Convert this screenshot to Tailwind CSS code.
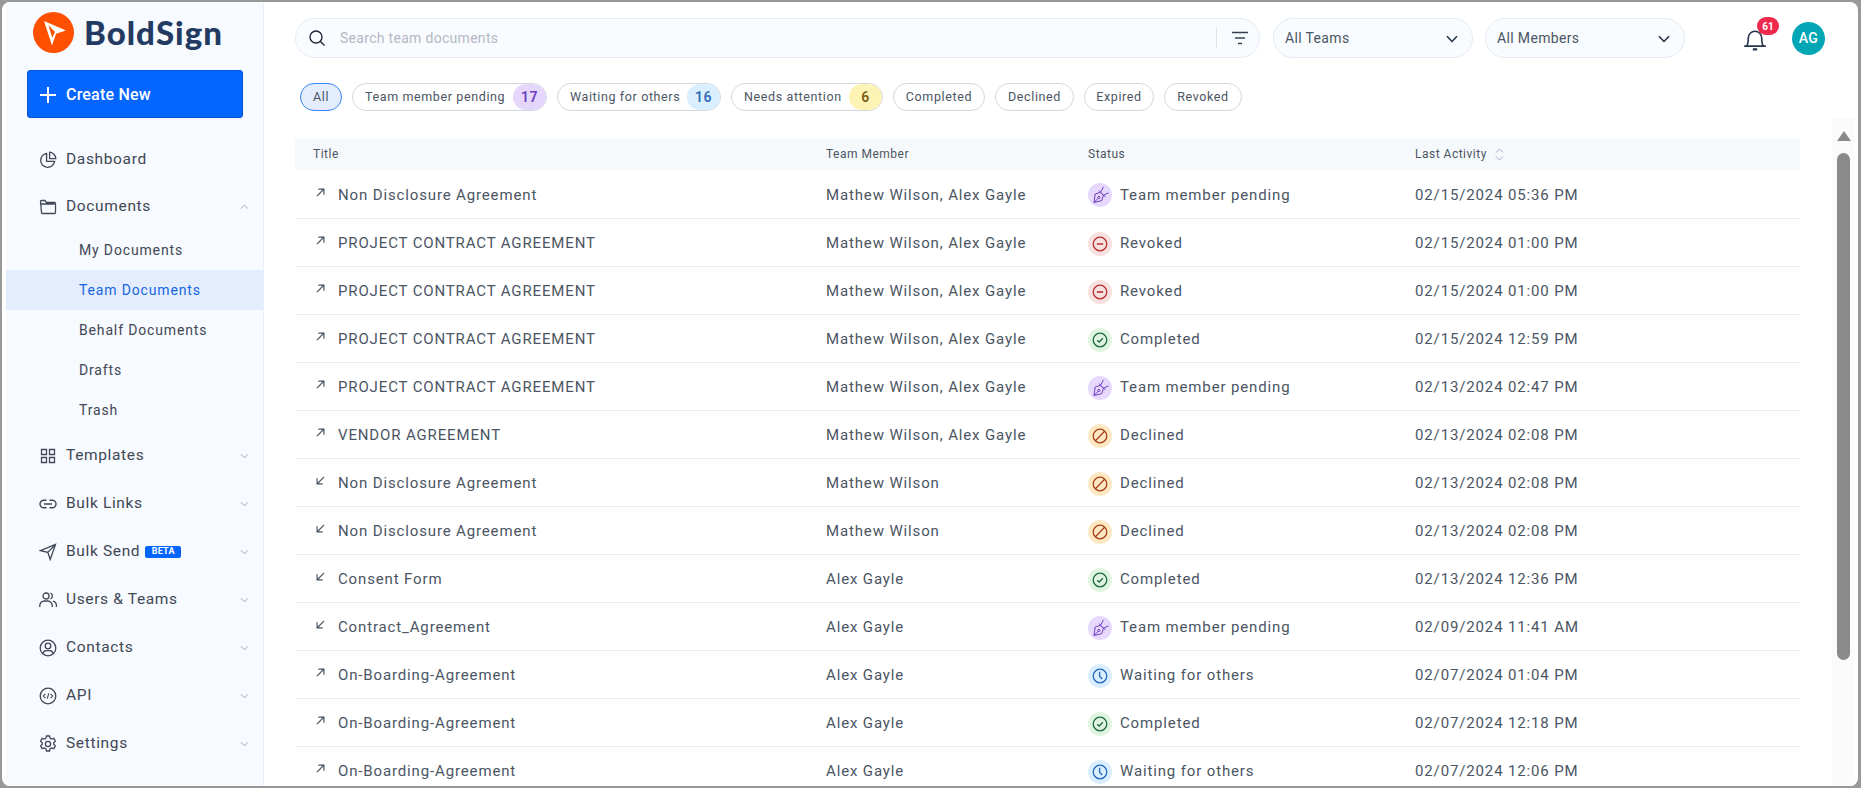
<!DOCTYPE html>
<html lang="en">
  <head>
    <meta charset="UTF-8" />
    <title>BoldSign - Team Documents</title>
    <script src="https://cdn.jsdelivr.net/npm/@tailwindcss/browser@4"></script>
  </head>
  <body class="font-['Roboto',sans-serif]">
    <!-- shared icons -->
    <svg class="hidden" xmlns="http://www.w3.org/2000/svg">
      <symbol id="out" viewBox="0 0 10 10"><path d="M1 9 8.6 1.4M2.6 1.2H8.8V7.4" fill="none" stroke="currentColor" stroke-width="1.3"/></symbol>
      <symbol id="in" viewBox="0 0 10 10"><path d="M9 1 1.4 8.6M7.4 8.8H1.2V2.6" fill="none" stroke="currentColor" stroke-width="1.3"/></symbol>
      <symbol id="chev-down" viewBox="0 0 10 6"><path d="M1 1l4 4 4-4" fill="none" stroke="currentColor" stroke-width="1"/></symbol>
      <symbol id="nib" viewBox="0 0 24 24"><g fill="none" stroke="currentColor" stroke-width="1"><path d="M6 19.5 7.2 11l5.2-1.6 3 3L13.8 17.6z"/><path d="M6 19.5 10.2 15.2"/><circle cx="10.9" cy="14.4" r="1.1"/><path d="M12.4 9.4 15.6 3.8M15.4 12.4 20.5 9.8"/><path d="M11 7.6 17.4 14"/></g></symbol>
      <symbol id="minus" viewBox="0 0 24 24"><g fill="none" stroke="currentColor" stroke-width="1.3"><circle cx="12" cy="12" r="6.8"/><path d="M8.8 12h6.4" stroke-width="1.6"/></g></symbol>
      <symbol id="check" viewBox="0 0 24 24"><g fill="none" stroke="currentColor" stroke-width="1.3"><circle cx="12" cy="12" r="6.8"/><path d="M9.2 12.2 11.2 14l3.6-3.8"/></g></symbol>
      <symbol id="ban" viewBox="0 0 24 24"><g fill="none" stroke="currentColor" stroke-width="1.3"><circle cx="12" cy="12" r="6.8"/><path d="M7.4 16.8 16.6 7.2"/></g></symbol>
      <symbol id="clock" viewBox="0 0 24 24"><g fill="none" stroke="currentColor" stroke-width="1.3"><circle cx="12" cy="12" r="6.8"/><path d="M11.6 7.8V12.4L14.2 15"/></g></symbol>
    </svg>

    <div class="w-[1861px] h-[788px] bg-[#999999] pt-[2px] pl-[2px] pr-[3px] pb-[2px] overflow-hidden">
      <div class="flex h-full bg-white rounded-lg pl-[4px] overflow-hidden">

        <!-- sidebar -->
        <aside class="w-[258px] shrink-0 h-full bg-[#f7fafe] border-r border-[#e8eef6] text-[#414755]">
          <div class="flex items-center h-[41px] mt-[10px] pl-[27px] gap-[10px]">
            <svg class="w-[41px] h-[41px]" viewBox="0 0 41 41"><circle cx="20.5" cy="20.5" r="20.5" fill="#ff4f00"/><path d="M11 9 33 18.5 23 21.8 19 33.5z" fill="#fff"/><path d="M15.5 13.2 22 20 19.2 25.8z" fill="#ff4f00"/></svg>
            <span class="font-['Lato',sans-serif] font-black text-[33px] leading-none tracking-[1px] text-[#233a62]">BoldSign</span>
          </div>
          <button class="flex items-center w-[216px] h-[48px] ml-[21px] mt-[17px] pl-[12px] pt-[1px] gap-[10px] bg-[#0565ff] border border-[#0454d6] rounded-[3px] text-white text-[16px] tracking-[0.2px] font-medium">
            <svg class="w-[16px] h-[16px]" viewBox="0 0 16 16"><path d="M8 0v16M0 8h16" stroke="currentColor" stroke-width="2"/></svg>
            Create New
          </button>

          <nav class="mt-[18px] text-[15.5px] tracking-[0.65px]">
            <a class="flex items-center h-[48px] pl-[33px] gap-[9px]">
              <svg class="w-[18px] h-[18px]" viewBox="0 0 18 18" fill="none" stroke="currentColor" stroke-width="1.3"><path d="M7.6 2.4a7 7 0 1 0 8 8H7.6z"/><path d="M10.6 1.2a6.6 6.6 0 0 1 6.2 6.4h-6.2z"/></svg>
              Dashboard
            </a>
            <a class="flex items-center h-[46px] pl-[33px] pr-[14px] gap-[9px]">
              <svg class="w-[18px] h-[18px]" viewBox="0 0 18 18" fill="none" stroke="currentColor" stroke-width="1.3"><path d="M1.5 3.5a1 1 0 0 1 1-1h3.4l1.6 2h8a1 1 0 0 1 1 1v9a1 1 0 0 1-1 1h-12a1 1 0 0 1-1-1zM1.5 6h14"/></svg>
              Documents
              <svg class="w-[9px] h-[6px] ml-auto text-[#9ca3af] rotate-180"><use href="#chev-down"/></svg>
            </a>
            <div class="text-[14px] tracking-[0.85px] mb-[2px]">
              <a class="flex items-center h-[40px] pl-[73px]">My Documents</a>
              <a class="flex items-center h-[40px] pl-[73px] bg-[#e3edfd] text-[#1766e0]">Team Documents</a>
              <a class="flex items-center h-[40px] pl-[73px]">Behalf Documents</a>
              <a class="flex items-center h-[40px] pl-[73px]">Drafts</a>
              <a class="flex items-center h-[40px] pl-[73px]">Trash</a>
            </div>
            <a class="flex items-center h-[48px] pl-[33px] pr-[14px] gap-[9px]">
              <svg class="w-[18px] h-[18px]" viewBox="0 0 18 18" fill="none" stroke="currentColor" stroke-width="1.3"><path d="M2.5 2.5h5v5h-5zM10.5 2.5h5v5h-5zM2.5 10.5h5v5h-5zM10.5 10.5h5v5h-5z"/></svg>
              Templates
              <svg class="w-[9px] h-[6px] ml-auto text-[#9ca3af]"><use href="#chev-down"/></svg>
            </a>
            <a class="flex items-center h-[48px] pl-[33px] pr-[14px] gap-[9px]">
              <svg class="w-[18px] h-[18px]" viewBox="0 0 18 18" fill="none" stroke="currentColor" stroke-width="1.4"><path d="M7.5 5.2H4.8a3.8 3.8 0 0 0 0 7.6h2.7M10.5 5.2h2.7a3.8 3.8 0 0 1 0 7.6h-2.7M5 9h8"/></svg>
              Bulk Links
              <svg class="w-[9px] h-[6px] ml-auto text-[#9ca3af]"><use href="#chev-down"/></svg>
            </a>
            <a class="flex items-center h-[48px] pl-[33px] pr-[14px] gap-[9px]">
              <svg class="w-[18px] h-[18px]" viewBox="0 0 18 18" fill="none" stroke="currentColor" stroke-width="1.3"><path d="M1.5 7.6 16.5 1.5 11.2 16.5 8.8 9.4zM8.8 9.4 16.5 1.5"/></svg>
              Bulk Send
              <span class="h-[12px] w-[36px] ml-[-4px] flex items-center justify-center rounded-[2px] bg-[#0565ff] text-white text-[9px] font-bold tracking-[0.3px]">BETA</span>
              <svg class="w-[9px] h-[6px] ml-auto text-[#9ca3af]"><use href="#chev-down"/></svg>
            </a>
            <a class="flex items-center h-[48px] pl-[33px] pr-[14px] gap-[9px]">
              <svg class="w-[18px] h-[18px]" viewBox="0 0 18 18" fill="none" stroke="currentColor" stroke-width="1.3"><circle cx="7" cy="5" r="3"/><path d="M.8 16v-1.5A4.5 4.5 0 0 1 5.3 10h3.4a4.5 4.5 0 0 1 4.5 4.5V16M11.5 2.2a3 3 0 0 1 0 5.6M14 10.2a4.5 4.5 0 0 1 3.4 4.3V16"/></svg>
              Users &amp; Teams
              <svg class="w-[9px] h-[6px] ml-auto text-[#9ca3af]"><use href="#chev-down"/></svg>
            </a>
            <a class="flex items-center h-[48px] pl-[33px] pr-[14px] gap-[9px]">
              <svg class="w-[18px] h-[18px]" viewBox="0 0 18 18" fill="none" stroke="currentColor" stroke-width="1.3"><circle cx="9" cy="9" r="7.8"/><circle cx="9" cy="7" r="2.8"/><path d="M3.8 14.6c.6-2 2-3 3.6-3h3.2c1.6 0 3 1 3.6 3"/></svg>
              Contacts
              <svg class="w-[9px] h-[6px] ml-auto text-[#9ca3af]"><use href="#chev-down"/></svg>
            </a>
            <a class="flex items-center h-[48px] pl-[33px] pr-[14px] gap-[9px]">
              <svg class="w-[18px] h-[18px]" viewBox="0 0 18 18" fill="none" stroke="currentColor" stroke-width="1.3"><circle cx="9" cy="9" r="7.8"/><path d="M6.4 6.8 4.4 9l2 2.2M11.6 6.8l2 2.2-2 2.2M9.8 6.4 8.2 11.6" stroke-width="1.1"/></svg>
              API
              <svg class="w-[9px] h-[6px] ml-auto text-[#9ca3af]"><use href="#chev-down"/></svg>
            </a>
            <a class="flex items-center h-[48px] pl-[33px] pr-[14px] gap-[9px]">
              <svg class="w-[18px] h-[18px]" viewBox="0 0 18 18" fill="none" stroke="currentColor" stroke-width="1.3"><circle cx="9" cy="9" r="2.6"/><path d="M7.4 1h3.2l.5 2.3 1.5.8 2.2-.8 1.6 2.8-1.7 1.6v1.6l1.7 1.6-1.6 2.8-2.2-.8-1.5.8-.5 2.3H7.4l-.5-2.3-1.5-.8-2.2.8-1.6-2.8 1.7-1.6V8.1L1.6 6.1l1.6-2.8 2.2.8 1.5-.8z"/></svg>
              Settings
              <svg class="w-[9px] h-[6px] ml-auto text-[#9ca3af]"><use href="#chev-down"/></svg>
            </a>
          </nav>
        </aside>

        <!-- main -->
        <main class="flex-1 min-w-0 pl-[31px] pt-[16px] text-[#4b5563]">
          <!-- top bar -->
          <div class="flex items-center h-[40px]">
            <div class="flex items-center w-[965px] h-[40px] pl-[12px] pr-[11px] rounded-full border border-[#e4eaf2] bg-[#f9fcff]">
              <svg class="w-[18px] h-[18px] text-[#1f2937]" viewBox="0 0 18 18" fill="none" stroke="currentColor" stroke-width="1.4"><circle cx="8" cy="8" r="6"/><path d="M12.4 12.4 16.5 16.5"/></svg>
              <span class="ml-[14px] text-[14px] tracking-[0.3px] text-[#b2b8c4]">Search team documents</span>
              <span class="ml-auto h-[20px] w-px bg-[#dde3ea]"></span>
              <svg class="w-[16px] h-[14px] ml-[15px] text-[#374151]" viewBox="0 0 16 14" fill="none" stroke="currentColor" stroke-width="1.3"><path d="M0 1.5h16M3 7h10M6 12.5h4"/></svg>
            </div>
            <div class="flex items-center justify-between w-[200px] h-[40px] ml-[13px] pl-[11px] pr-[14px] pt-[1px] rounded-full border border-[#e4eaf2] bg-[#f9fcff] text-[14px] tracking-[0.35px]">
              All Teams
              <svg class="w-[12px] h-[8px] text-[#1f2d45]" viewBox="0 0 12 8" fill="none" stroke="currentColor" stroke-width="1.5"><path d="M1 1.2 6 6.4l5-5.2"/></svg>
            </div>
            <div class="flex items-center justify-between w-[200px] h-[40px] ml-[12px] pl-[11px] pr-[14px] pt-[1px] rounded-full border border-[#e4eaf2] bg-[#f9fcff] text-[14px] tracking-[0.35px]">
              All Members
              <svg class="w-[12px] h-[8px] text-[#1f2d45]" viewBox="0 0 12 8" fill="none" stroke="currentColor" stroke-width="1.5"><path d="M1 1.2 6 6.4l5-5.2"/></svg>
            </div>
            <div class="relative ml-[58px] w-[24px] h-[26px]">
              <svg class="w-[24px] h-[26px] text-[#27344d]" viewBox="0 0 22 24" fill="none" stroke="currentColor" stroke-width="1.5"><path d="M1 19.5h20M3.2 19.5c1.6-2 1.6-4 1.6-7.5a6.2 6.2 0 0 1 12.4 0c0 3.5 0 5.5 1.6 7.5"/><path d="M9 22.5h4" stroke-width="2"/></svg>
              <span class="absolute left-[14px] top-[-8px] flex items-center justify-center w-[22px] h-[18px] rounded-full bg-[#ee2a4d] text-white text-[10px] font-bold">61</span>
            </div>
            <div class="flex items-center justify-center w-[33px] h-[33px] ml-[25px] rounded-full bg-[#03a6b5] text-white text-[14px] font-medium tracking-[0.4px]">AG</div>
          </div>

          <!-- status filters -->
          <div class="flex items-center gap-[10px] ml-[5px] mt-[25px] text-[12.5px] tracking-[0.62px]">
            <span class="flex items-center justify-center h-[28px] w-[42px] rounded-full border border-[#3b82f6] bg-[#e3edfd]">All</span>
            <span class="flex items-center justify-between h-[28px] w-[195px] pl-[12px] rounded-full border border-[#d3d7df] overflow-hidden">Team member pending<b class="flex items-center justify-center w-[33px] h-full bg-[#e5d6fb] text-[#6d3fc0] text-[14px] font-semibold rounded-full">17</b></span>
            <span class="flex items-center justify-between h-[28px] w-[164px] pl-[12px] rounded-full border border-[#d3d7df] overflow-hidden">Waiting for others<b class="flex items-center justify-center w-[33px] h-full bg-[#d9efff] text-[#2f6cb5] text-[14px] font-semibold rounded-full">16</b></span>
            <span class="flex items-center justify-between h-[28px] w-[152px] pl-[12px] rounded-full border border-[#d3d7df] overflow-hidden">Needs attention<b class="flex items-center justify-center w-[33px] h-full bg-[#fdf3b5] text-[#7a5b12] text-[14px] font-semibold rounded-full">6</b></span>
            <span class="flex items-center justify-center h-[28px] w-[92px] rounded-full border border-[#d3d7df]">Completed</span>
            <span class="flex items-center justify-center h-[28px] w-[79px] rounded-full border border-[#d3d7df]">Declined</span>
            <span class="flex items-center justify-center h-[28px] w-[70px] rounded-full border border-[#d3d7df]">Expired</span>
            <span class="flex items-center justify-center h-[28px] w-[78px] rounded-full border border-[#d3d7df]">Revoked</span>
          </div>

          <!-- table and scrollbar -->
          <div class="flex mt-[7px]">
            <div class="w-[1505px] pt-[20px]">
              <table class="w-full table-fixed text-[15px] tracking-[0.86px]">
                <thead class="bg-[#f6f9fc] text-[12px] tracking-[0.5px]">
                  <tr class="h-[32px]">
                    <th class="w-[531px] pl-[18px] text-left font-normal">Title</th>
                    <th class="w-[262px] text-left font-normal">Team Member</th>
                    <th class="w-[327px] text-left font-normal">Status</th>
                    <th class="text-left font-normal">
                      <span class="flex items-center gap-[8px]">Last Activity
                        <svg class="w-[9px] h-[13px] text-[#a3acc4]" viewBox="0 0 9 13" fill="none" stroke="currentColor"><path d="M1 4.5 4.5 1 8 4.5M1 8.5 4.5 12 8 8.5"/></svg>
                      </span>
                    </th>
                  </tr>
                </thead>
                <tbody class="[&_td]:pt-[3px]">
                  <tr class="h-[48px] border-b border-[#e9eff5]">
                    <td class="pl-[21px]"><span class="flex items-center gap-[13px]"><svg class="w-[9px] h-[9px] mb-[6px] shrink-0"><use href="#out"/></svg>Non Disclosure Agreement</span></td>
                    <td>Mathew Wilson, Alex Gayle</td>
                    <td><span class="flex items-center gap-[8px]"><span class="flex items-center justify-center w-[24px] h-[24px] rounded-full bg-[#e7d9fd] text-[#6d3fc0]"><svg class="w-[24px] h-[24px]"><use href="#nib"/></svg></span>Team member pending</span></td>
                    <td>02/15/2024 05:36 PM</td>
                  </tr>
                  <tr class="h-[48px] border-b border-[#e9eff5]">
                    <td class="pl-[21px]"><span class="flex items-center gap-[13px]"><svg class="w-[9px] h-[9px] mb-[6px] shrink-0"><use href="#out"/></svg>PROJECT CONTRACT AGREEMENT</span></td>
                    <td>Mathew Wilson, Alex Gayle</td>
                    <td><span class="flex items-center gap-[8px]"><span class="flex items-center justify-center w-[24px] h-[24px] rounded-full bg-[#f8e0df] text-[#b3302f]"><svg class="w-[24px] h-[24px]"><use href="#minus"/></svg></span>Revoked</span></td>
                    <td>02/15/2024 01:00 PM</td>
                  </tr>
                  <tr class="h-[48px] border-b border-[#e9eff5]">
                    <td class="pl-[21px]"><span class="flex items-center gap-[13px]"><svg class="w-[9px] h-[9px] mb-[6px] shrink-0"><use href="#out"/></svg>PROJECT CONTRACT AGREEMENT</span></td>
                    <td>Mathew Wilson, Alex Gayle</td>
                    <td><span class="flex items-center gap-[8px]"><span class="flex items-center justify-center w-[24px] h-[24px] rounded-full bg-[#f8e0df] text-[#b3302f]"><svg class="w-[24px] h-[24px]"><use href="#minus"/></svg></span>Revoked</span></td>
                    <td>02/15/2024 01:00 PM</td>
                  </tr>
                  <tr class="h-[48px] border-b border-[#e9eff5]">
                    <td class="pl-[21px]"><span class="flex items-center gap-[13px]"><svg class="w-[9px] h-[9px] mb-[6px] shrink-0"><use href="#out"/></svg>PROJECT CONTRACT AGREEMENT</span></td>
                    <td>Mathew Wilson, Alex Gayle</td>
                    <td><span class="flex items-center gap-[8px]"><span class="flex items-center justify-center w-[24px] h-[24px] rounded-full bg-[#dff3e3] text-[#1e6b40]"><svg class="w-[24px] h-[24px]"><use href="#check"/></svg></span>Completed</span></td>
                    <td>02/15/2024 12:59 PM</td>
                  </tr>
                  <tr class="h-[48px] border-b border-[#e9eff5]">
                    <td class="pl-[21px]"><span class="flex items-center gap-[13px]"><svg class="w-[9px] h-[9px] mb-[6px] shrink-0"><use href="#out"/></svg>PROJECT CONTRACT AGREEMENT</span></td>
                    <td>Mathew Wilson, Alex Gayle</td>
                    <td><span class="flex items-center gap-[8px]"><span class="flex items-center justify-center w-[24px] h-[24px] rounded-full bg-[#e7d9fd] text-[#6d3fc0]"><svg class="w-[24px] h-[24px]"><use href="#nib"/></svg></span>Team member pending</span></td>
                    <td>02/13/2024 02:47 PM</td>
                  </tr>
                  <tr class="h-[48px] border-b border-[#e9eff5]">
                    <td class="pl-[21px]"><span class="flex items-center gap-[13px]"><svg class="w-[9px] h-[9px] mb-[6px] shrink-0"><use href="#out"/></svg>VENDOR AGREEMENT</span></td>
                    <td>Mathew Wilson, Alex Gayle</td>
                    <td><span class="flex items-center gap-[8px]"><span class="flex items-center justify-center w-[24px] h-[24px] rounded-full bg-[#fde8c4] text-[#a8431c]"><svg class="w-[24px] h-[24px]"><use href="#ban"/></svg></span>Declined</span></td>
                    <td>02/13/2024 02:08 PM</td>
                  </tr>
                  <tr class="h-[48px] border-b border-[#e9eff5]">
                    <td class="pl-[21px]"><span class="flex items-center gap-[13px]"><svg class="w-[9px] h-[9px] mb-[6px] shrink-0"><use href="#in"/></svg>Non Disclosure Agreement</span></td>
                    <td>Mathew Wilson</td>
                    <td><span class="flex items-center gap-[8px]"><span class="flex items-center justify-center w-[24px] h-[24px] rounded-full bg-[#fde8c4] text-[#a8431c]"><svg class="w-[24px] h-[24px]"><use href="#ban"/></svg></span>Declined</span></td>
                    <td>02/13/2024 02:08 PM</td>
                  </tr>
                  <tr class="h-[48px] border-b border-[#e9eff5]">
                    <td class="pl-[21px]"><span class="flex items-center gap-[13px]"><svg class="w-[9px] h-[9px] mb-[6px] shrink-0"><use href="#in"/></svg>Non Disclosure Agreement</span></td>
                    <td>Mathew Wilson</td>
                    <td><span class="flex items-center gap-[8px]"><span class="flex items-center justify-center w-[24px] h-[24px] rounded-full bg-[#fde8c4] text-[#a8431c]"><svg class="w-[24px] h-[24px]"><use href="#ban"/></svg></span>Declined</span></td>
                    <td>02/13/2024 02:08 PM</td>
                  </tr>
                  <tr class="h-[48px] border-b border-[#e9eff5]">
                    <td class="pl-[21px]"><span class="flex items-center gap-[13px]"><svg class="w-[9px] h-[9px] mb-[6px] shrink-0"><use href="#in"/></svg>Consent Form</span></td>
                    <td>Alex Gayle</td>
                    <td><span class="flex items-center gap-[8px]"><span class="flex items-center justify-center w-[24px] h-[24px] rounded-full bg-[#dff3e3] text-[#1e6b40]"><svg class="w-[24px] h-[24px]"><use href="#check"/></svg></span>Completed</span></td>
                    <td>02/13/2024 12:36 PM</td>
                  </tr>
                  <tr class="h-[48px] border-b border-[#e9eff5]">
                    <td class="pl-[21px]"><span class="flex items-center gap-[13px]"><svg class="w-[9px] h-[9px] mb-[6px] shrink-0"><use href="#in"/></svg>Contract_Agreement</span></td>
                    <td>Alex Gayle</td>
                    <td><span class="flex items-center gap-[8px]"><span class="flex items-center justify-center w-[24px] h-[24px] rounded-full bg-[#e7d9fd] text-[#6d3fc0]"><svg class="w-[24px] h-[24px]"><use href="#nib"/></svg></span>Team member pending</span></td>
                    <td>02/09/2024 11:41 AM</td>
                  </tr>
                  <tr class="h-[48px] border-b border-[#e9eff5]">
                    <td class="pl-[21px]"><span class="flex items-center gap-[13px]"><svg class="w-[9px] h-[9px] mb-[6px] shrink-0"><use href="#out"/></svg>On-Boarding-Agreement</span></td>
                    <td>Alex Gayle</td>
                    <td><span class="flex items-center gap-[8px]"><span class="flex items-center justify-center w-[24px] h-[24px] rounded-full bg-[#d9efff] text-[#2468bd]"><svg class="w-[24px] h-[24px]"><use href="#clock"/></svg></span>Waiting for others</span></td>
                    <td>02/07/2024 01:04 PM</td>
                  </tr>
                  <tr class="h-[48px] border-b border-[#e9eff5]">
                    <td class="pl-[21px]"><span class="flex items-center gap-[13px]"><svg class="w-[9px] h-[9px] mb-[6px] shrink-0"><use href="#out"/></svg>On-Boarding-Agreement</span></td>
                    <td>Alex Gayle</td>
                    <td><span class="flex items-center gap-[8px]"><span class="flex items-center justify-center w-[24px] h-[24px] rounded-full bg-[#dff3e3] text-[#1e6b40]"><svg class="w-[24px] h-[24px]"><use href="#check"/></svg></span>Completed</span></td>
                    <td>02/07/2024 12:18 PM</td>
                  </tr>
                  <tr class="h-[48px] border-b border-[#e9eff5]">
                    <td class="pl-[21px]"><span class="flex items-center gap-[13px]"><svg class="w-[9px] h-[9px] mb-[6px] shrink-0"><use href="#out"/></svg>On-Boarding-Agreement</span></td>
                    <td>Alex Gayle</td>
                    <td><span class="flex items-center gap-[8px]"><span class="flex items-center justify-center w-[24px] h-[24px] rounded-full bg-[#d9efff] text-[#2468bd]"><svg class="w-[24px] h-[24px]"><use href="#clock"/></svg></span>Waiting for others</span></td>
                    <td>02/07/2024 12:06 PM</td>
                  </tr>
                </tbody>
              </table>
            </div>
            <!-- scrollbar -->
            <div class="w-[23px] h-[700px] ml-[32px] bg-[#fbfbfb] flex flex-col items-center">
              <svg class="w-[14px] h-[10px] mt-[13px]" viewBox="0 0 14 10"><path d="M7 0 14 10H0z" fill="#8a8a8a"/></svg>
              <div class="w-[13px] h-[507px] mt-[12px] rounded-full bg-[#8a8a8a]"></div>
            </div>
          </div>
        </main>
      </div>
    </div>
  </body>
</html>
